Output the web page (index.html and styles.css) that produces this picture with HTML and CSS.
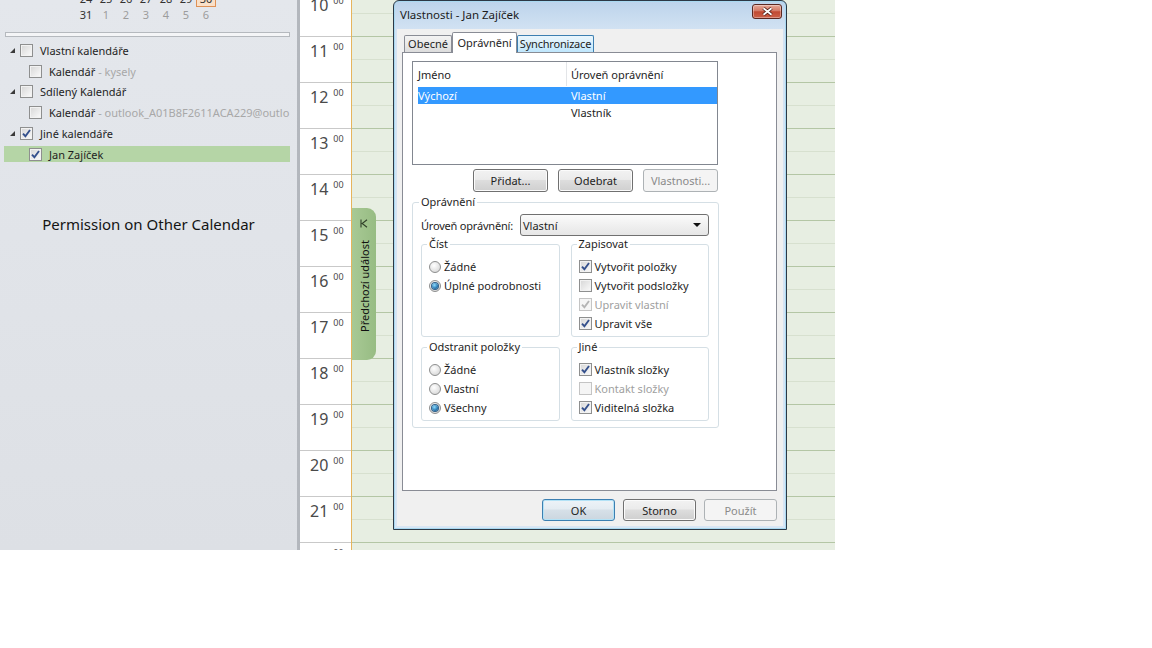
FILE: index.html
```html
<!DOCTYPE html>
<html lang="cs">
<head>
<meta charset="utf-8">
<title>Vlastnosti - Jan Zajíček</title>
<link rel="stylesheet" href="styles.css">
</head>
<body>
<div class="screen">
  <aside class="nav">
    <div class="minical">
      <div class="mc-row"><span class="d">24</span><span class="d">25</span><span class="d">26</span><span class="d">27</span><span class="d">28</span><span class="d">29</span><span class="d today">30</span></div>
      <div class="mc-row"><span class="d">31</span><span class="d other">1</span><span class="d other">2</span><span class="d other">3</span><span class="d other">4</span><span class="d other">5</span><span class="d other">6</span></div>
    </div>
    <div class="splitter"></div>
    <ul class="tree">
      <li class="node group"><span class="twisty"></span><span class="cb"></span><span class="label">Vlastní kalendáře</span></li>
      <li class="node child"><span class="cb"></span><span class="label">Kalendář<span class="owner"> - kysely</span></span></li>
      <li class="node group"><span class="twisty"></span><span class="cb"></span><span class="label">Sdílený Kalendář</span></li>
      <li class="node child"><span class="cb"></span><span class="label">Kalendář<span class="owner"> - outlook_A01B8F2611ACA229@outlo</span></span></li>
      <li class="node group"><span class="twisty"></span><span class="cb"><svg viewBox="0 0 11 11"><path d="M2 5.6 L4.4 8.2 L9 2" /></svg></span><span class="label">Jiné kalendáře</span></li>
      <li class="node child selected"><span class="cb"><svg viewBox="0 0 11 11"><path d="M2 5.6 L4.4 8.2 L9 2" /></svg></span><span class="label">Jan Zajíček</span></li>
    </ul>
    <p class="caption">Permission on Other Calendar</p>
  </aside>

  <div class="times">
    <div class="hour"><span class="h">10</span><span class="m">00</span></div>
    <div class="hour"><span class="h">11</span><span class="m">00</span></div>
    <div class="hour"><span class="h">12</span><span class="m">00</span></div>
    <div class="hour"><span class="h">13</span><span class="m">00</span></div>
    <div class="hour"><span class="h">14</span><span class="m">00</span></div>
    <div class="hour"><span class="h">15</span><span class="m">00</span></div>
    <div class="hour"><span class="h">16</span><span class="m">00</span></div>
    <div class="hour"><span class="h">17</span><span class="m">00</span></div>
    <div class="hour"><span class="h">18</span><span class="m">00</span></div>
    <div class="hour"><span class="h">19</span><span class="m">00</span></div>
    <div class="hour"><span class="h">20</span><span class="m">00</span></div>
    <div class="hour"><span class="h">21</span><span class="m">00</span></div>
    <div class="hour"><span class="h">22</span><span class="m">00</span></div>
  </div>

  <div class="day">
    <div class="slot full"></div><div class="slot"></div>
    <div class="slot full"></div><div class="slot"></div>
    <div class="slot full"></div><div class="slot"></div>
    <div class="slot full"></div><div class="slot"></div>
    <div class="slot full"></div><div class="slot"></div>
    <div class="slot full"></div><div class="slot"></div>
    <div class="slot full"></div><div class="slot"></div>
    <div class="slot full"></div><div class="slot"></div>
    <div class="slot full"></div><div class="slot"></div>
    <div class="slot full"></div><div class="slot"></div>
    <div class="slot full"></div><div class="slot"></div>
    <div class="slot full"></div><div class="slot"></div>
    <div class="slot full"></div><div class="slot"></div>
    <div class="prev-tab">
      <svg class="prev-ico" viewBox="0 0 8 9"><path d="M1 0.5 V8.5 M7 0.8 L2.2 4.5 L7 8.2" /></svg>
      <span class="vt">Předchozí událost</span>
    </div>
  </div>

  <div class="dialog">
    <div class="titlebar">
      <span class="title">Vlastnosti - Jan Zajíček</span>
      <span class="close"><svg viewBox="0 0 11 9"><path class="xo" d="M1.5 1.2 L9.5 7.8 M9.5 1.2 L1.5 7.8" /><path class="xi" d="M1.5 1.2 L9.5 7.8 M9.5 1.2 L1.5 7.8" /></svg></span>
    </div>
    <div class="client">
      <div class="tabs">
        <span class="tab t-gen">Obecné</span>
        <span class="tab active t-perm">Oprávnění</span>
        <span class="tab hot t-sync">Synchronizace</span>
      </div>
      <div class="panel">
        <div class="list">
          <div class="lv-head"><span class="c1">Jméno</span><span class="c2">Úroveň oprávnění</span></div>
          <div class="lv-row sel"><span class="c1">Výchozí</span><span class="c2">Vlastní</span></div>
          <div class="lv-row"><span class="c1"></span><span class="c2">Vlastník</span></div>
        </div>
        <div class="list-btns">
          <button class="btn">Přidat...</button>
          <button class="btn">Odebrat</button>
          <button class="btn" disabled>Vlastnosti...</button>
        </div>
        <fieldset class="perm">
          <legend>Oprávnění</legend>
          <div class="level">
            <span class="level-label">Úroveň oprávnění:</span>
            <span class="combo"><span>Vlastní</span><span class="arrow"></span></span>
          </div>
          <div class="subgrid">
            <fieldset class="sub">
              <legend>Číst</legend>
              <div class="opt"><span class="rb"></span><span class="txt">Žádné</span></div>
              <div class="opt"><span class="rb on"></span><span class="txt">Úplné podrobnosti</span></div>
            </fieldset>
            <fieldset class="sub">
              <legend>Zapisovat</legend>
              <div class="opt"><span class="cb"><svg viewBox="0 0 11 11"><path d="M2 5.6 L4.4 8.2 L9 2" /></svg></span><span class="txt">Vytvořit položky</span></div>
              <div class="opt"><span class="cb"></span><span class="txt">Vytvořit podsložky</span></div>
              <div class="opt dis"><span class="cb"><svg viewBox="0 0 11 11"><path d="M2 5.6 L4.4 8.2 L9 2" /></svg></span><span class="txt">Upravit vlastní</span></div>
              <div class="opt"><span class="cb"><svg viewBox="0 0 11 11"><path d="M2 5.6 L4.4 8.2 L9 2" /></svg></span><span class="txt">Upravit vše</span></div>
            </fieldset>
            <fieldset class="sub">
              <legend>Odstranit položky</legend>
              <div class="opt"><span class="rb"></span><span class="txt">Žádné</span></div>
              <div class="opt"><span class="rb"></span><span class="txt">Vlastní</span></div>
              <div class="opt"><span class="rb on"></span><span class="txt">Všechny</span></div>
            </fieldset>
            <fieldset class="sub">
              <legend>Jiné</legend>
              <div class="opt"><span class="cb"><svg viewBox="0 0 11 11"><path d="M2 5.6 L4.4 8.2 L9 2" /></svg></span><span class="txt">Vlastník složky</span></div>
              <div class="opt dis"><span class="cb"></span><span class="txt">Kontakt složky</span></div>
              <div class="opt"><span class="cb"><svg viewBox="0 0 11 11"><path d="M2 5.6 L4.4 8.2 L9 2" /></svg></span><span class="txt">Viditelná složka</span></div>
            </fieldset>
          </div>
        </fieldset>
      </div>
      <div class="dlg-btns">
        <button class="btn default">OK</button>
        <button class="btn">Storno</button>
        <button class="btn" disabled>Použít</button>
      </div>
    </div>
  </div>
</div>
</body>
</html>
```
FILE: styles.css
```css
* { box-sizing: border-box; }
html, body { margin: 0; padding: 0; background: #fff; }
body {
  font-family: "Noto Sans", "DejaVu Sans", sans-serif;
  font-size: 11px;
  color: #1e1e1e;
}

.screen {
  position: relative;
  display: flex;
  width: 835px;
  height: 550px;
  overflow: hidden;
}

/* ---------- navigation pane ---------- */
.nav {
  width: 300px;
  flex: none;
  overflow: hidden;
  background: linear-gradient(#e4e7ec, #dde0e5);
  border-right: 3px solid;
  border-image: linear-gradient(to right, #d4d7dc, #b3b7bd) 1;
}
.minical { margin-top: -10px; padding-left: 76px; }
.mc-row { display: flex; height: 16px; align-items: center; }
.d { width: 20px; text-align: center; line-height: 15px; color: #333; }
.d.other { color: #9c9c9c; }
.d.today { border: 1px solid #de9156; background: #fae0c8; }

.splitter {
  margin: 10px 0 0 5px;
  width: 285px;
  height: 5px;
  border: 1px solid #b5b9be;
  background: #f4f5f7;
}

.tree {
  list-style: none;
  margin: 5.3px 0 0 4px;
  padding: 0;
  width: 286px;
  display: flex;
  flex-direction: column;
  gap: 4.8px;
}
.node {
  height: 16px;
  display: flex;
  align-items: center;
  white-space: nowrap;
  overflow: hidden;
}
.node.group { padding-left: 6px; }
.node.child { padding-left: 25px; }
.node.selected { background: #b5d5a6; }
.twisty {
  flex: none;
  width: 0; height: 0;
  border-left: 5px solid transparent;
  border-bottom: 5px solid #3a3a3a;
  margin-right: 5px;
}
.label { margin-left: 7px; }
.owner { color: #a8a8a8; }

.cb {
  flex: none;
  width: 13px; height: 13px;
  border: 1px solid #8e8f8f;
  background: linear-gradient(135deg, #d6d6d6, #fbfbfb);
  box-shadow: inset 0 0 0 1px #f2f2f2;
}
.cb svg { display: block; width: 11px; height: 11px; }
.cb path { fill: none; stroke: #34508c; stroke-width: 1.9; }

.caption {
  margin: 52px 0 0;
  text-align: center;
  font-size: 15px;
  line-height: 20px;
  color: #141414;
}

/* ---------- time ruler ---------- */
.times {
  width: 52px;
  flex: none;
  background: #fff;
  border-right: 1px solid #e6b45c;
}
.hour {
  height: 46px;
  border-top: 1px solid #c9c9c9;
  padding: 6px 0 0 10px;
  display: flex;
  align-items: flex-start;
  color: #4a4a4a;
}
.hour:first-child { margin-top: -10px; }
.h { font-size: 16px; line-height: 16px; }
.m { font-size: 9px; line-height: 9px; margin: -1px 0 0 5px; }

/* ---------- day area ---------- */
.day {
  flex: 1;
  position: relative;
  background: #e7eee2;
}
.slot { height: 23px; border-top: 1px solid #d7e0cf; }
.slot.full { border-top-color: #b4c6a5; }
.slot:first-child { margin-top: -10px; }

.prev-tab {
  position: absolute;
  left: 0;
  top: 208px;
  width: 24px;
  height: 152px;
  border-radius: 0 9px 9px 0;
  background: linear-gradient(to right, #a8c995, #97bc83);
  display: flex;
  flex-direction: column;
  align-items: center;
  padding-top: 11px;
}
.prev-ico { width: 8px; height: 9px; display: block; }
.prev-ico path { fill: none; stroke: #2f3f28; stroke-width: 1.1; }
.vt {
  margin-top: 12px;
  writing-mode: vertical-rl;
  transform: rotate(180deg);
  color: #111;
  white-space: nowrap;
}

/* ---------- dialog window ---------- */
.dialog {
  position: absolute;
  left: 393px;
  top: 0;
  width: 394px;
  height: 530px;
  border: 1px solid #2c3845;
  border-radius: 6px 6px 0 0;
  background: linear-gradient(#bcd3eb, #d3e3f3 30px, #d8e6f4);
  box-shadow: inset 0 0 0 1px #a9d9f1;
  padding: 0 3px 3px;
  display: flex;
  flex-direction: column;
}
.titlebar {
  height: 28px;
  flex: none;
  display: flex;
  align-items: flex-start;
  justify-content: space-between;
  padding: 0 1px 0 3px;
}
.title { font-size: 11.5px; line-height: 27px; color: #1b1b1b; }
.close {
  margin-top: 3px;
  width: 30px;
  height: 15px;
  border: 1px solid #5b2821;
  border-radius: 3px;
  background: linear-gradient(#e6a797, #d47a66 45%, #c14a33 52%, #cc6149);
  box-shadow: inset 0 0 0 1px rgba(255,255,255,0.35);
  display: flex;
  align-items: center;
  justify-content: center;
}
.close svg { width: 11px; height: 9px; display: block; }
.close .xo { fill: none; stroke: #4a1a13; stroke-width: 3.4; }
.close .xi { fill: none; stroke: #fff; stroke-width: 1.8; }

.client {
  flex: 1;
  background: #f0f0f0;
  padding: 3px 6px 5px 5px;
  display: flex;
  flex-direction: column;
}

.tabs {
  height: 20px;
  flex: none;
  display: flex;
  align-items: flex-end;
  padding-left: 2px;
  position: relative;
  z-index: 1;
}
.tab {
  height: 17px;
  padding: 0;
  text-align: center;
  line-height: 15px;
  border: 1px solid #898c95;
  border-bottom: none;
  border-radius: 2px 2px 0 0;
  background: linear-gradient(#f3f3f3, #e9e9e9 50%, #dcdcdc);
  white-space: nowrap;
}
.t-gen { width: 48px; }
.t-perm { width: 65px; }
.t-sync { width: 77px; letter-spacing: -0.2px; }
.tab.active {
  height: 21px;
  margin-bottom: -1px;
  line-height: 19px;
  background: #fff;
}
.tab.hot {
  border-color: #3c7fb1;
  background: linear-gradient(#eaf6fd, #d9f0fc 50%, #bee6fd);
}

.panel {
  height: 439px;
  flex: none;
  border: 1px solid #898c95;
  background: #fff;
  padding: 8px 9px 0;
}

.list {
  width: 306px;
  height: 104px;
  border: 1px solid #828790;
  background: #fff;
}
.lv-head { display: flex; height: 24px; }
.lv-head .c1 {
  width: 154px;
  padding-left: 5px;
  border-right: 1px solid #e3e5e8;
  display: flex;
  align-items: center;
}
.lv-head .c2 { padding-left: 4px; display: flex; align-items: center; }
.lv-row {
  display: flex;
  height: 17px;
  width: 299px;
  margin-left: 5px;
  align-items: center;
}
.lv-head + .lv-row { margin-top: 1px; }
.lv-row .c1 { width: 153px; }
.lv-row.sel { background: #3399ff; color: #fff; }

.list-btns {
  width: 306px;
  margin-top: 4px;
  display: flex;
  justify-content: flex-end;
  gap: 10px;
}

.btn {
  width: 75px;
  height: 23px;
  padding: 0;
  font: inherit;
  color: #1e1e1e;
  border: 1px solid #707070;
  border-radius: 3px;
  background: linear-gradient(#f2f2f2, #ebebeb 45%, #dddddd 50%, #cfcfcf);
  box-shadow: inset 0 0 0 1px #fbfbfb;
}
.btn:disabled {
  color: #8a8a8a;
  border-color: #adb2b5;
  background: #f4f4f4;
  box-shadow: none;
}
.btn.default {
  border-color: #3c7fb1;
  background: linear-gradient(#edf3f8, #e4ecf2 45%, #d6e0e8 50%, #cbd6df);
  box-shadow: inset 0 0 0 1px #b3e2f6;
}

fieldset {
  margin: 0;
  min-width: 0;
  border: 1px solid #d5dfe5;
  border-radius: 3px;
}
legend {
  padding: 0 2px;
  margin-left: -2px;
  line-height: 14px;
}

.perm {
  width: 307px;
  margin-top: 3px;
  padding: 5px 9px 6px 8px;
}
.level { display: flex; align-items: center; height: 22px; }
.level-label { width: 99px; flex: none; letter-spacing: -0.2px; }
.combo {
  width: 189px;
  height: 22px;
  border: 1px solid #707070;
  border-radius: 3px;
  background: linear-gradient(#fbfbfb, #f0f0f0 50%, #e6e6e6);
  display: flex;
  align-items: center;
  justify-content: space-between;
  padding: 0 7px 0 2px;
}
.arrow {
  width: 0; height: 0;
  border-left: 4px solid transparent;
  border-right: 4px solid transparent;
  border-top: 4px solid #111;
}

.subgrid {
  margin-top: 1px;
  display: grid;
  grid-template-columns: 1fr 1fr;
  column-gap: 11px;
  row-gap: 3px;
}
.sub { padding: 6px 4px 3px 7px; }
.opt { height: 19px; display: flex; align-items: center; white-space: nowrap; }
.opt .txt { margin-left: 3px; }
.opt.dis .txt { color: #a0a0a0; }
.opt.dis .cb { border-color: #c4c4c4; background: #f5f5f5; box-shadow: none; }
.opt.dis .cb path { stroke: #b4b4b4; }

.rb {
  flex: none;
  width: 12px; height: 12px;
  border-radius: 50%;
  border: 1px solid #8d8e8e;
  background: radial-gradient(circle at 40% 35%, #ffffff, #d0d0d0);
  display: flex;
  align-items: center;
  justify-content: center;
}
.rb.on::after {
  content: "";
  width: 6px; height: 6px;
  border-radius: 50%;
  background: radial-gradient(circle at 40% 35%, #8ddcff, #1a6aa6 70%, #0d4a7c);
  box-shadow: 0 0 0 1px #2f5f88;
}

.dlg-btns {
  margin-top: 8px;
  height: 22px;
  display: flex;
  justify-content: flex-end;
  gap: 8px;
}
.dlg-btns .btn { width: 73px; height: 22px; }
```
